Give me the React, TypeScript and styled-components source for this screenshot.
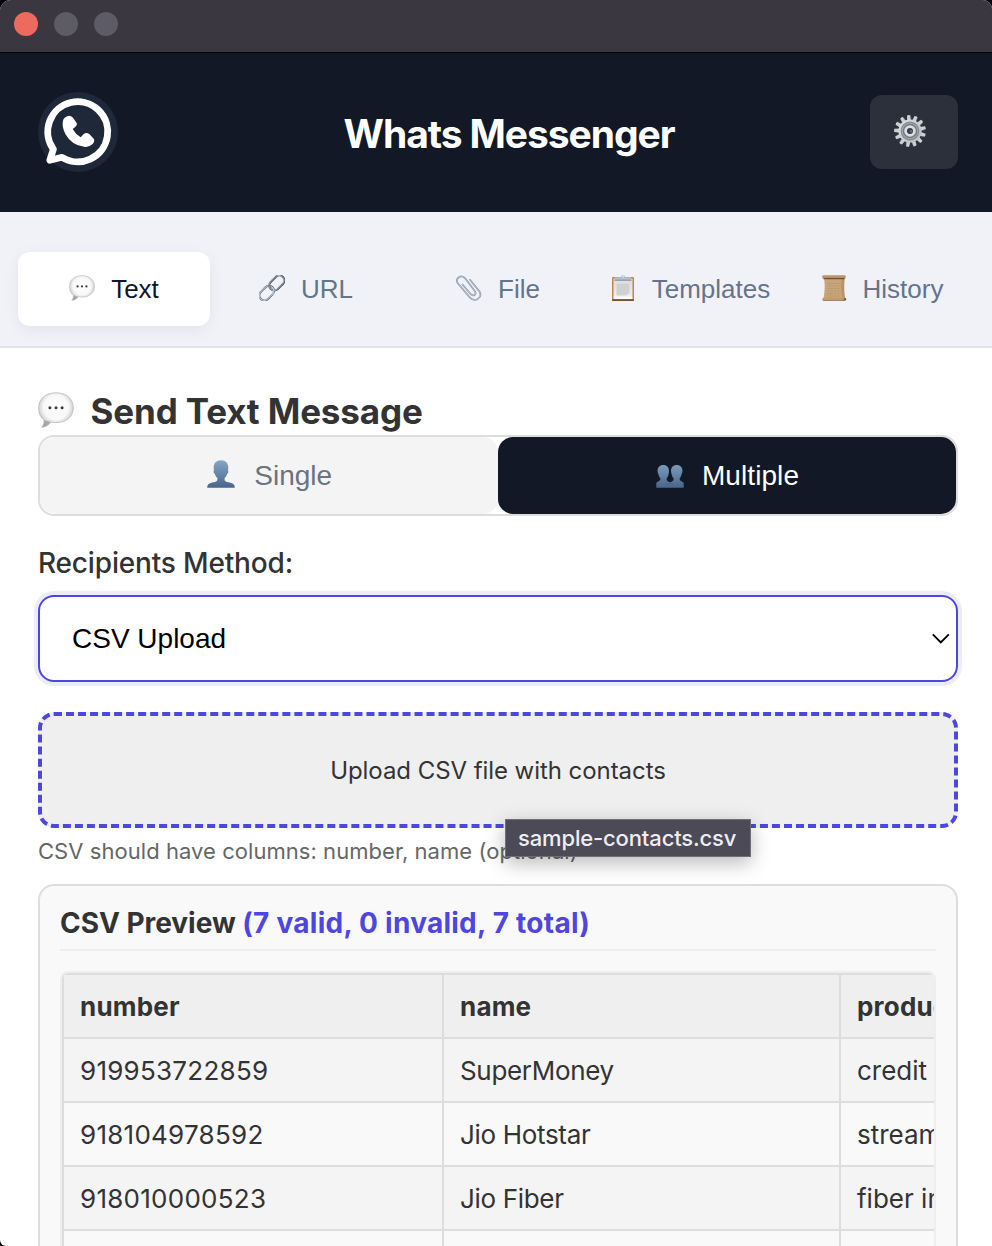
import React from "react";
import styled, { createGlobalStyle, css } from "styled-components";

const GlobalStyle = createGlobalStyle`
  * { box-sizing: border-box; }
  html, body { margin: 0; padding: 0; background: #000; }
  body { font-family: Inter, "Liberation Sans", sans-serif; color: #333; overflow: hidden; }
`;

const INDIGO = "#4f46e0";
const NAVY = "#121826";

const Window = styled.div`
  width: 992px;
  height: 1246px;
  display: flex;
  flex-direction: column;
  overflow: hidden;
  background: #fff;
  border-radius: 11px 9px 0 6px;
`;

const TitleBar = styled.div`
  flex: none;
  height: 52px;
  display: flex;
  align-items: flex-start;
  gap: 16px;
  padding: 12px 14px;
  background: #3a3741;
`;

const Light = styled.span<{ $color: string }>`
  width: 24px;
  height: 24px;
  border-radius: 50%;
  background: ${(p) => p.$color};
`;

const Header = styled.header`
  flex: none;
  height: 160px;
  display: flex;
  align-items: center;
  padding: 0 34px 0 38px;
  background: ${NAVY};
  box-shadow: inset 0 1px 0 #000;
`;

const Logo = styled.div`
  width: 80px;
  height: 80px;
  border-radius: 50%;
  background: #1f2838;
  svg { display: block; }
`;

const Title = styled.h1`
  flex: 1;
  margin: 0;
  padding: 3px 0 0 30px;
  text-align: center;
  color: #fff;
  font-size: 39px;
  line-height: 48px;
  font-weight: 700;
  letter-spacing: -1.07px;
`;

const SettingsButton = styled.button`
  width: 88px;
  height: 74px;
  display: flex;
  align-items: center;
  justify-content: center;
  padding: 0 8px 2px 0;
  border: 0;
  border-radius: 12px;
  background: #2b303b;
`;

const Tabs = styled.nav`
  flex: none;
  height: 136px;
  display: flex;
  padding: 40px 14px 20px 18px;
  background: #f1f2f8;
  border-bottom: 2px solid #e2e3e8;
`;

const Tab = styled.button<{ $active?: boolean }>`
  width: 192px;
  height: 74px;
  display: flex;
  align-items: center;
  justify-content: center;
  gap: 16px;
  padding: 0;
  border: 0;
  border-radius: 12px;
  background: transparent;
  color: #64748b;
  font: 400 26px "Liberation Sans", Arial, sans-serif;
  svg { margin-top: -2px; flex: none; }
  ${(p) =>
    p.$active &&
    css`
      background: #fff;
      color: #0f172a;
      box-shadow: 0 4px 16px rgba(15, 23, 42, 0.06);
    `}
`;

const Main = styled.main`
  flex: 1;
  display: flex;
  flex-direction: column;
  padding: 40px 34px 0 38px;
`;

const SectionTitle = styled.h2`
  flex: none;
  height: 47px;
  display: flex;
  align-items: flex-start;
  gap: 16.5px;
  margin: 0;
  font-size: 35px;
  line-height: 46px;
  font-weight: 700;
  letter-spacing: -0.14px;
  svg { margin-top: 4px; }
`;

const Segmented = styled.div`
  flex: none;
  height: 81px;
  display: grid;
  grid-template-columns: 1fr 1fr;
  border: 2px solid #ddd;
  border-radius: 16px;
  background: #fff;
`;

const Segment = styled.button<{ $active?: boolean }>`
  display: flex;
  align-items: center;
  justify-content: center;
  gap: ${(p) => (p.$active ? "18px" : "19.5px")};
  padding: 0 0 0 1px;
  border: 0;
  border-radius: 15px;
  background: ${(p) => (p.$active ? NAVY : "#f4f4f4")};
  color: ${(p) => (p.$active ? "#fff" : "#6b7280")};
  font: 400 28px "Liberation Sans", Arial, sans-serif;
  letter-spacing: ${(p) => (p.$active ? "0.08px" : "0")};
  svg { margin-top: -3px; }
`;

const Label = styled.label`
  flex: none;
  margin: 30px 0 15px;
  font-size: 28px;
  line-height: 34px;
  font-weight: 500;
  letter-spacing: -0.17px;
`;

const Select = styled.div`
  flex: none;
  height: 87px;
  display: flex;
  align-items: center;
  justify-content: space-between;
  padding: 0 6px 0 32px;
  border: 2px solid ${INDIGO};
  border-radius: 16px;
  background: #fff;
  box-shadow: 0 0 0 4px rgba(79, 70, 229, 0.1);
  color: #000;
  font: 400 28px "Liberation Sans", Arial, sans-serif;
`;

const DropZone = styled.div`
  flex: none;
  height: 116px;
  display: flex;
  align-items: center;
  justify-content: center;
  position: relative;
  margin-top: 30px;
  border: 4px dashed ${INDIGO};
  border-radius: 16px;
  background: #efefef;
  font-size: 24px;
  letter-spacing: -0.06px;
`;

const FileTip = styled.div`
  position: absolute;
  left: 463px;
  top: 103px;
  width: 246px;
  height: 38px;
  display: flex;
  align-items: center;
  padding-left: 12px;
  border: 1px solid #706e79;
  background: #4c4a57;
  color: #eeedf0;
  font-size: 22px;
  font-weight: 500;
  letter-spacing: -0.15px;
  white-space: nowrap;
  box-shadow: 0 6px 20px rgba(0, 0, 0, 0.28);
`;

const Hint = styled.small`
  flex: none;
  margin: 10px 0 20px;
  font-size: 22px;
  line-height: 26px;
  letter-spacing: 0.05px;
  color: #666;
`;

const Preview = styled.section`
  flex: none;
  height: 420px;
  padding: 20px;
  border: 2px solid #ddd;
  border-radius: 16px;
  background: #f9f9f9;
`;

const PreviewTitle = styled.h4`
  margin: 0 0 20px;
  padding-bottom: 9px;
  border-bottom: 2px solid #eee;
  font-size: 28px;
  line-height: 34px;
  font-weight: 700;
  letter-spacing: -0.04px;
`;

const Count = styled.span`
  color: ${INDIGO};
  letter-spacing: 0.26px;
`;

const TableScroll = styled.div`
  height: 360px;
  overflow: hidden;
  border: 2px solid #eee;
  border-radius: 8px;
`;

const Table = styled.table`
  width: 1080px;
  table-layout: fixed;
  border-spacing: 0;
  border-left: 2px solid #ddd;
  border-top: 2px solid #ddd;
  font-size: 26px;
  line-height: 31px;
`;

const Col = styled.col<{ $width: number }>`
  width: ${(p) => p.$width}px;
`;

const HeadCell = styled.th`
  height: 64px;
  padding: 1px 16px 0;
  text-align: left;
  font-weight: 700;
  letter-spacing: 0.2px;
  background: #efefef;
  border-right: 2px solid #ddd;
  border-bottom: 2px solid #ddd;
`;

const Cell = styled.td<{ $numeric?: boolean }>`
  height: 64px;
  padding: 1px 16px 0;
  white-space: nowrap;
  letter-spacing: ${(p) => (p.$numeric ? "0.26px" : "-0.32px")};
  border-right: 2px solid #ddd;
  border-bottom: 2px solid #ddd;
  &:last-child { letter-spacing: 0; }
`;

const Row = styled.tr`
  &:nth-child(odd) { background: #f4f4f4; }
`;

const LogoMark = () => (
  <svg width="80" height="80" viewBox="38 92 80 80">
    <path
      d="M49.8 160.2 L53.4 149.3 A30 30 0 1 1 62 157.3 Z"
      fill="none"
      stroke="#fff"
      strokeWidth="6.8"
      strokeLinejoin="round"
    />
    <path
      transform="scale(.33333)"
      d="M196 352Q208 342 218 352L230 369Q234 376 218 387Q226 402 242 412L252 401Q260 396 268 402L281 416Q286 422 278 432Q266 443 252 440Q215 436 196 402Q185 380 189 362Q190 356 196 352Z"
      fill="#fff"
    />
  </svg>
);

const teeth = Array.from({ length: 13 }, (_, i) => (i * 360) / 13 - 5);

const Gear = () => (
  <svg width="34" height="34" viewBox="0 0 34 34">
    <defs>
      <linearGradient id="gear" x1="0" y1="0" x2="1" y2="1">
        <stop offset="0" stopColor="#dfe2e6" />
        <stop offset="1" stopColor="#b4b8bd" />
      </linearGradient>
    </defs>
    {teeth.map((a) => (
      <g key={a} transform={`rotate(${a} 17 17)`}>
        <path d="M15 7 L15.400 1.300 Q17 .7 18.600 1.300 L19 7Z" fill="#ccd0d5" />
        <path d="M18.800 1.800 L19.100 5.500" stroke="#776f68" strokeWidth=".5" />
      </g>
    ))}
    <circle cx="17" cy="17" r="11.6" fill="url(#gear)" />
    <circle cx="17" cy="17" r="9.400" fill="#85898d" />
    <circle cx="17" cy="17" r="8.300" fill="#a2a6a9" />
    <circle cx="17" cy="17" r="7.200" fill="#75797d" />
    <circle cx="17" cy="17" r="4.400" fill="#343a46" stroke="#dadde4" strokeWidth="2.800" />
    <circle cx="18" cy="17.300" r="1.200" fill="#6d737c" />
  </svg>
);

const Bubble = ({ size }: { size: number }) => (
  <svg width={size} height={size} viewBox="0 0 36 36">
    <defs>
      <radialGradient id="bubble" cx=".5" cy=".42" r=".58">
        <stop offset="0" stopColor="#fff" />
        <stop offset=".62" stopColor="#f8f8f8" />
        <stop offset="1" stopColor="#bcbcbc" />
      </radialGradient>
    </defs>
    <path
      d="M18 .8C28 .8 35.3 6.6 35.3 15.8S28 30.600 18 30.600c-2.200 0-3.600-.2-5-.5C10.600 33 8 34.900 3.700 35.300c2-2.200 2.500-4.300 2.300-7.300C2.500 25.300.7 21.500.7 15.800.7 6.600 8 .8 18 .8Z"
      fill="url(#bubble)"
      stroke="#b9b9b9"
      strokeWidth=".8"
    />
    <path d="M4.200 35.100c5-.600 7-3 8.600-5l-6.600-2.200c.200 3-.3 5-2 7.200Z" fill="#979797" opacity=".65" />
    <g fill="#3a3a3a">
      <circle cx="11.900" cy="15.800" r="1.500" />
      <circle cx="18" cy="15.800" r="1.500" />
      <circle cx="24.100" cy="15.800" r="1.500" />
    </g>
  </svg>
);

const Link = () => (
  <svg width="26" height="26" viewBox="0 0 26 26" fill="none">
    <g transform="rotate(-45 13 13)">
      <rect x="-2.600" y="7.900" width="16.500" height="10" rx="5" stroke="#5e6064" strokeWidth="2" />
      <rect x="-2.800" y="7.700" width="16.500" height="10" rx="5" stroke="#b9cbdc" strokeWidth="1" />
      <rect x="11.300" y="7.900" width="17.200" height="10" rx="5" stroke="#4f4b4b" strokeWidth="2" />
      <rect x="11.100" y="7.600" width="17.200" height="10" rx="5" stroke="#a9bed2" strokeWidth=".9" />
      <path d="M8.900 17.700a5 5 0 0 0 4.800-5" stroke="#b9cbdc" strokeWidth="1.300" />
    </g>
  </svg>
);

const Paperclip = () => (
  <svg width="26" height="26" viewBox="0 0 26 26" fill="none" strokeLinecap="round">
    <path
      d="M6.500 9.500 L14.800 19.200 C17.600 22 21 19 18.700 16 L9.300 3.600 C5.500 -1.200 -1.500 3.300 2 8.600 L13.800 22.500 C18.800 27.800 27 22.800 23.500 16.500 L14 4.800"
      stroke="#8294a6"
      strokeWidth="1.700"
    />
    <path
      d="M6.500 9.500 L14.800 19.200 C17.600 22 21 19 18.700 16 L9.300 3.600 C5.500 -1.200 -1.500 3.300 2 8.600 L13.800 22.500 C18.800 27.800 27 22.800 23.500 16.500 L14 4.800"
      stroke="#cddae6"
      strokeWidth=".6"
    />
  </svg>
);

const Clipboard = () => (
  <svg width="26" height="26" viewBox="0 0 26 26">
    <defs>
      <linearGradient id="paper" x1="0" y1="0" x2="0" y2="1">
        <stop offset="0" stopColor="#dcdcdf" />
        <stop offset=".8" stopColor="#ececee" />
        <stop offset="1" stopColor="#fff" />
      </linearGradient>
    </defs>
    <rect x="2" y="2" width="22" height="24" rx="1" fill="#b98a4d" />
    <path d="M2 24.200h22v.8a1 1 0 0 1-1 1H3a1 1 0 0 1-1-1z" fill="#76502a" />
    <rect x="3.500" y="3.500" width="19" height="20.500" fill="url(#paper)" />
    <path d="M6.500 8.500h13v9.500l-3.500 2.500H6.500z" fill="#d3d3d6" />
    <path d="M7 10h12M7 12h12M7 14h12M7 16h12M7 18h10" stroke="#c6c6ca" strokeWidth=".5" />
    <path d="M10.500 2.200Q11 .2 13 .2t2.500 2h5.500v3.300h-16V2.200z" fill="#b3c0ce" />
    <path d="M4.500 5.200h17" stroke="#878f98" strokeWidth="1" />
    <circle cx="13" cy="1.700" r=".8" fill="#f1f2f8" />
  </svg>
);

const Scroll = () => (
  <svg width="26" height="26" viewBox="0 0 26 26">
    <path d="M3 2.500h20.500c-.5 8-.5 14 .5 21H2.500C4 15 4 10 3 2.500Z" fill="#c8a47a" />
    <path d="M20.500 3h3c-.5 8-.5 13 .3 20h-2.600c-1-7-1.200-13-.7-20Z" fill="#b99369" />
    <path
      d="M6.500 8.500h13M6.500 11h12.500M6.500 13.500h13M6 16h13M6 18.500h12.500M6 21h13"
      stroke="#b08d66"
      strokeWidth=".5"
      strokeDasharray="2.500 .8"
    />
    <rect x="1.300" y=".3" width="23.400" height="3.200" rx="1" fill="#b9946b" />
    <path d="M2.500 3.600h21" stroke="#6d4c30" strokeWidth="1.200" />
    <rect x="1.300" y="22.800" width="23.600" height="3" rx="1.400" fill="#c19b70" />
    <path d="M2 25.600h22" stroke="#8d6a46" strokeWidth=".7" />
    <circle cx="24" cy="24.200" r="1.200" fill="#7c5937" />
  </svg>
);

const PersonFill = () => (
  <defs>
    <linearGradient id="person" x1="0" y1="0" x2="0" y2="28" gradientUnits="userSpaceOnUse">
      <stop offset="0" stopColor="#86a7c7" />
      <stop offset="1" stopColor="#48658a" />
    </linearGradient>
  </defs>
);

const Person = () => (
  <svg width="28" height="28" viewBox="0 0 28 28">
    <PersonFill />
    <path
      d="M14 .2c4.700 0 7.300 3 7.300 7.400 0 1.300-.1 2-.3 2.800.9.400.5 3-.9 3.500-.5 1.700-1.300 3-2.500 4v2.400c1 1.700 3.200 1.900 6 2.500 3 .7 4.200 2.200 4.200 4.900H.2c0-2.700 1.200-4.200 4.200-4.900 2.800-.6 5-.8 6-2.500v-2.400c-1.200-1-2-2.300-2.500-4-1.400-.5-1.800-3.100-.9-3.500-.2-.8-.3-1.500-.3-2.800C6.700 3.200 9.300.2 14 .2Z"
      fill="url(#person)"
    />
  </svg>
);

const People = () => (
  <svg width="28" height="28" viewBox="0 0 28 28">
    <PersonFill />
    <g fill="url(#person)">
      <path d="M7.300 5c3.700 0 5.700 2.500 5.700 6 0 1.300-.1 2.500-.5 3.600-.4 1.600-1 3-2 4 .2 2.600 1.200 3 3.800 3.700v5.500H.3v-4.600c.7-1.600 3.900-1.500 4.200-4.600-1-1-1.600-2.400-2-4C2 13.500 1.500 12.300 1.500 11c0-3.500 2.100-6 5.800-6Z" />
      <path d="M20.700 5c3.700 0 5.800 2.500 5.800 6 0 1.300-.5 2.500-1 3.600-.4 1.600-1 3-2 4 .3 3.100 3.500 3 4.200 4.600v4.600H14v-5.500c2.400-.7 3.500-1.100 3.700-3.700-1-1-1.600-2.400-2-4-.4-1.100-.7-2.300-.7-3.600 0-3.500 2-6 5.700-6Z" />
    </g>
    <path d="M10 24.500q4-3 8 0" stroke="#3c5878" strokeWidth=".8" fill="none" opacity=".6" />
  </svg>
);

const Chevron = () => (
  <svg width="18" height="11" viewBox="0 0 18 11">
    <path d="M.800 1.300 L8.800 9.300 L16.800 1.300" fill="none" stroke="#000" strokeWidth="1.900" />
  </svg>
);

const tabs = [
  { label: "Text", icon: <Bubble size={26} /> },
  { label: "URL", icon: <Link /> },
  { label: "File", icon: <Paperclip /> },
  { label: "Templates", icon: <Clipboard /> },
  { label: "History", icon: <Scroll /> },
];

const contacts = [
  ["919953722859", "SuperMoney", "credit card"],
  ["918104978592", "Jio Hotstar", "streaming"],
  ["918010000523", "Jio Fiber", "fiber internet"],
  ["", "", ""],
];

export default function App() {
  return (
    <>
      <GlobalStyle />
      <Window>
        <TitleBar>
          <Light $color="#ed6a5e" />
          <Light $color="#5d5b66" />
          <Light $color="#5d5b66" />
        </TitleBar>
        <Header>
          <Logo>
            <LogoMark />
          </Logo>
          <Title>Whats Messenger</Title>
          <SettingsButton aria-label="Settings">
            <Gear />
          </SettingsButton>
        </Header>
        <Tabs>
          {tabs.map((t, i) => (
            <Tab key={t.label} $active={i === 0}>
              {t.icon}
              {t.label}
            </Tab>
          ))}
        </Tabs>
        <Main>
          <SectionTitle>
            <Bubble size={36} />
            Send Text Message
          </SectionTitle>
          <Segmented>
            <Segment>
              <Person />
              Single
            </Segment>
            <Segment $active>
              <People />
              Multiple
            </Segment>
          </Segmented>
          <Label>Recipients Method:</Label>
          <Select>
            CSV Upload
            <Chevron />
          </Select>
          <DropZone>
            Upload CSV file with contacts
            <FileTip>sample-contacts.csv</FileTip>
          </DropZone>
          <Hint>CSV should have columns: number, name (optional)</Hint>
          <Preview>
            <PreviewTitle>
              CSV Preview <Count>(7 valid, 0 invalid, 7 total)</Count>
            </PreviewTitle>
            <TableScroll>
              <Table>
                <colgroup>
                  <Col $width={380} />
                  <Col $width={397} />
                  <Col $width={301} />
                </colgroup>
                <thead>
                  <tr>
                    <HeadCell>number</HeadCell>
                    <HeadCell>name</HeadCell>
                    <HeadCell>product</HeadCell>
                  </tr>
                </thead>
                <tbody>
                  {contacts.map(([number, name, product], i) => (
                    <Row key={i}>
                      <Cell $numeric>{number}</Cell>
                      <Cell>{name}</Cell>
                      <Cell>{product}</Cell>
                    </Row>
                  ))}
                </tbody>
              </Table>
            </TableScroll>
          </Preview>
        </Main>
      </Window>
    </>
  );
}
